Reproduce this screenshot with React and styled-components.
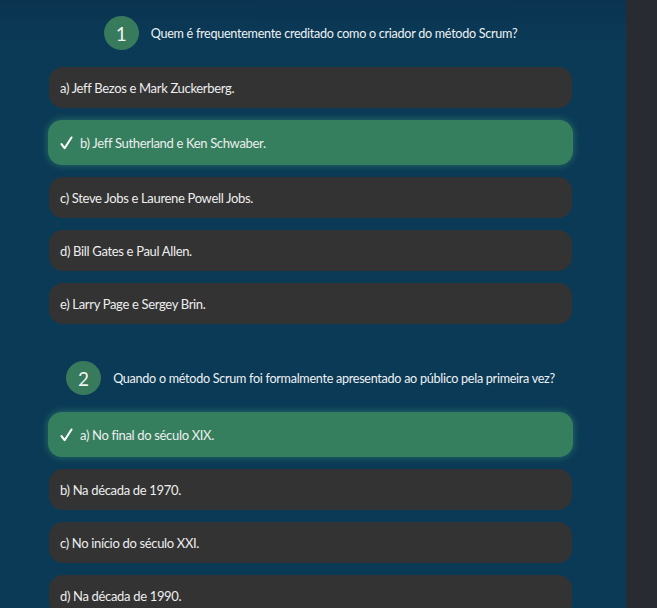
import React from 'react';
import styled, { createGlobalStyle } from 'styled-components';

const GlobalStyle = createGlobalStyle`
  html, body {
    margin: 0;
    padding: 0;
    height: 100%;
    overflow: hidden;
  }
  body {
    font-family: Lato, "Open Sans", "Liberation Sans", sans-serif;
  }
`;

const Page = styled.div`
  display: flex;
  height: 100vh;
`;

const Main = styled.main`
  flex: 1;
  background: linear-gradient(180deg, #0a3350 0px, #0b3a56 40px, #0b3a56 100%);
  overflow: hidden;
`;

const Sidebar = styled.aside`
  width: 31px;
  background-color: #282c32;
`;

const QuizList = styled.div`
  display: flex;
  flex-direction: column;
  gap: 37px;
  width: 523px;
  margin-left: 49px;
  padding-top: 16px;
`;

const QuestionBlock = styled.section`
  display: flex;
  flex-direction: column;
`;

const QuestionHeader = styled.div`
  display: flex;
  justify-content: center;
  align-items: center;
  gap: 12px;
  margin-bottom: 17px;
`;

const NumberBadge = styled.div`
  flex-shrink: 0;
  width: 35px;
  height: 34px;
  border-radius: 50%;
  background-color: #387a5c;
  color: #f2f2f2;
  display: flex;
  align-items: center;
  justify-content: center;
  font-size: 19px;
`;

const QuestionText = styled.h3`
  margin: 0;
  font-weight: 400;
  font-size: 12.6px;
  letter-spacing: -0.28px;
  white-space: nowrap;
  color: #eef1f3;
`;

const Options = styled.div`
  display: flex;
  flex-direction: column;
  gap: 12px;
`;

const Option = styled.div`
  display: flex;
  align-items: center;
  gap: 7px;
  box-sizing: border-box;
  height: ${props => (props.correct ? '45px' : '41px')};
  margin: ${props => (props.correct ? '0 -1px' : '0')};
  padding: 0 ${props => (props.correct ? '12px' : '11px')};
  border-radius: 14px;
  background-color: ${props => (props.correct ? '#357f5e' : '#333333')};
  box-shadow: ${props => (props.correct ? '0 0 7px 1px rgba(80, 190, 130, 0.35)' : 'none')};
  color: #eeeeee;
  font-size: 13px;
  letter-spacing: -0.33px;
  white-space: nowrap;
`;

const CheckIcon = () => (
  <svg width="13" height="14" viewBox="0 0 13 14" aria-hidden="true">
    <path
      d="M1.5 8.2 L4.6 12.2 L11.5 1.5"
      fill="none"
      stroke="#ffffff"
      strokeWidth="2.1"
      strokeLinecap="round"
      strokeLinejoin="round"
    />
  </svg>
);

const quiz = [
  {
    n: 1,
    q: 'Quem é frequentemente creditado como o criador do método Scrum?',
    options: [
      { t: 'a) Jeff Bezos e Mark Zuckerberg.' },
      { t: 'b) Jeff Sutherland e Ken Schwaber.', correct: true },
      { t: 'c) Steve Jobs e Laurene Powell Jobs.' },
      { t: 'd) Bill Gates e Paul Allen.' },
      { t: 'e) Larry Page e Sergey Brin.' },
    ],
  },
  {
    n: 2,
    q: 'Quando o método Scrum foi formalmente apresentado ao público pela primeira vez?',
    options: [
      { t: 'a) No final do século XIX.', correct: true },
      { t: 'b) Na década de 1970.' },
      { t: 'c) No início do século XXI.' },
      { t: 'd) Na década de 1990.' },
      { t: 'e) Em meados do século XX.' },
    ],
  },
];

const App = () => (
  <>
    <GlobalStyle />
    <Page>
      <Main>
        <QuizList>
          {quiz.map(item => (
            <QuestionBlock key={item.n}>
              <QuestionHeader>
                <NumberBadge>{item.n}</NumberBadge>
                <QuestionText>{item.q}</QuestionText>
              </QuestionHeader>
              <Options>
                {item.options.map(opt => (
                  <Option key={opt.t} correct={opt.correct}>
                    {opt.correct && <CheckIcon />}
                    {opt.t}
                  </Option>
                ))}
              </Options>
            </QuestionBlock>
          ))}
        </QuizList>
      </Main>
      <Sidebar />
    </Page>
  </>
);

export default App;
